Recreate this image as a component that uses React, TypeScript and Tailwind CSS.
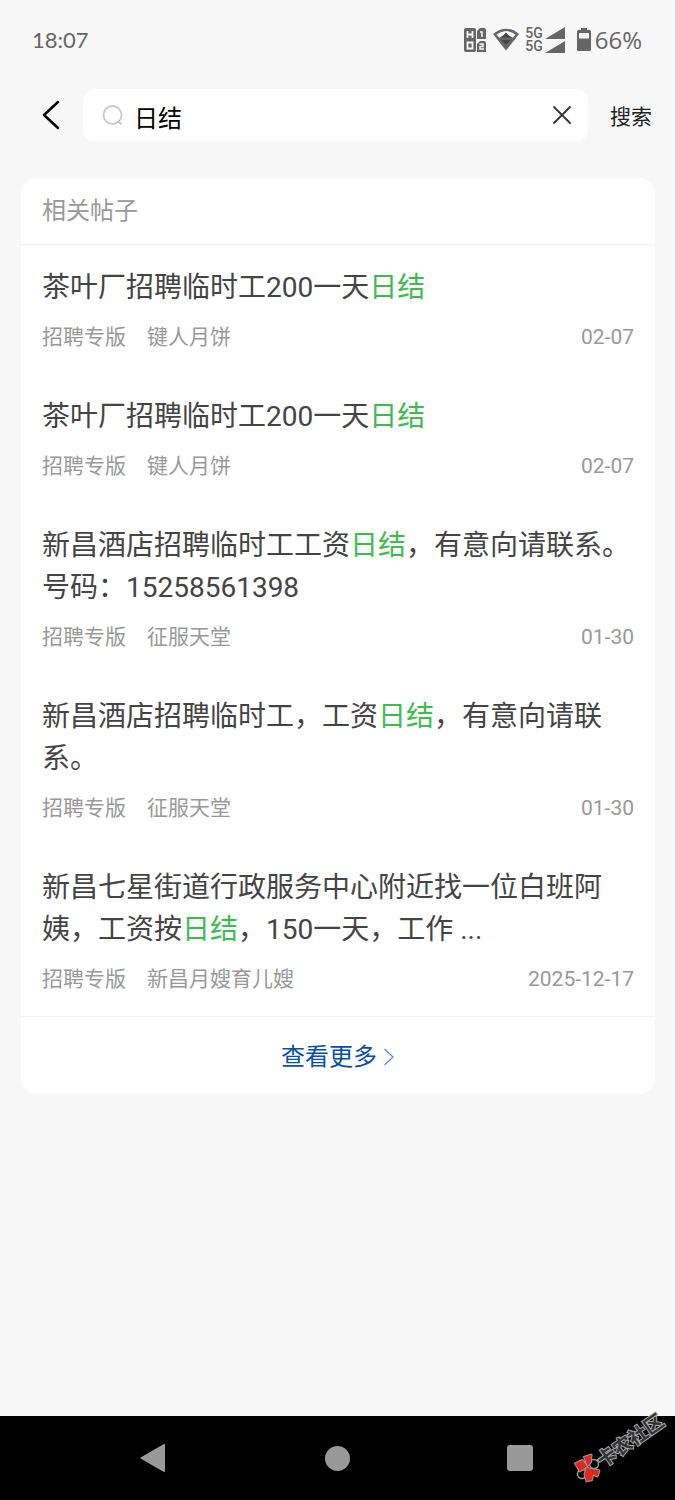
import { type FormEvent, useState } from "react";

type Post = {
  id: number;
  title: string;
  board: string;
  author: string;
  date: string;
};

const KEYWORD = "日结";

const posts: Post[] = [
  { id: 1, title: "茶叶厂招聘临时工200一天日结", board: "招聘专版", author: "键人月饼", date: "02-07" },
  { id: 2, title: "茶叶厂招聘临时工200一天日结", board: "招聘专版", author: "键人月饼", date: "02-07" },
  { id: 3, title: "新昌酒店招聘临时工工资日结，有意向请联系。号码：15258561398", board: "招聘专版", author: "征服天堂", date: "01-30" },
  { id: 4, title: "新昌酒店招聘临时工，工资日结，有意向请联系。", board: "招聘专版", author: "征服天堂", date: "01-30" },
  { id: 5, title: "新昌七星街道行政服务中心附近找一位白班阿姨，工资按日结，150一天，工作 ...", board: "招聘专版", author: "新昌月嫂育儿嫂", date: "2025-12-17" },
];

const StatusBar = () => (
  <div className="flex h-20 items-center justify-between pl-8 pr-[33px] text-[#666]">
    <span className="font-['Lato',sans-serif] text-[22px] leading-8">18:07</span>
    <div className="flex items-center">
      {/* HD 1/2 */}
      <svg width="24" height="26" viewBox="0 0 24 26" className="mr-1.5" aria-hidden="true">
        <rect x="1" y="1" width="12" height="24" rx="2" fill="#666" />
        <path d="M17 1h4q2 0 2 2v9h-9V4zM17 14h4q2 0 2 2v9h-9v-8z" fill="#666" />
        <path d="M4.500 4v7M9.500 4v7M4.500 7.500h5M4.500 15.500h5v6h-5z" fill="none" stroke="#f7f7f7" strokeWidth="1.800" />
        <path d="M17 5h2v5M16.500 17h3.500v2.500h-3v2.500h4" fill="none" stroke="#f7f7f7" strokeWidth="1.500" />
      </svg>
      {/* Wi-Fi */}
      <svg width="26" height="24" viewBox="0 0 26 24" className="mr-1.5" aria-hidden="true">
        <path d="M0 6Q13-4.500 26 6L13 22.500z" fill="#666" />
        <path d="M3.500 6.500Q13-.5 22.500 6.500L19.500 10Q13 5 6.500 10z" fill="#f7f7f7" />
        <path d="M6 10Q13 4 20 10L13 20z" fill="#666" />
        <path d="M8.500 9.500L13 4.500 17.500 9.500zM8.500 12h9L13 16.500z" fill="#444" />
      </svg>
      <span className="flex flex-col font-['Roboto',sans-serif] text-[14px] leading-[13px] font-medium">
        <span>5G</span>
        <span>5G</span>
      </span>
      <svg width="20" height="26" viewBox="0 0 20 26" className="ml-0.5 mr-3" aria-hidden="true">
        <path d="M20 0v12H0zM20 14v12H0z" fill="#666" />
      </svg>
      <svg width="14" height="24" viewBox="0 0 14 24" className="mr-1" aria-hidden="true">
        <path d="M4 0h6v2h2.500Q14 2 14 3.500v18q0 1.500-1.500 1.500h-11Q0 23 0 21.500v-18Q0 2 1.500 2H4z" fill="#666" />
        <path d="M2 5h10v5.500H2z" fill="#f7f7f7" />
      </svg>
      <span className="font-['Open_Sans',sans-serif] text-2xl leading-8">66%</span>
    </div>
  </div>
);

const SearchBar = () => {
  const [query, setQuery] = useState(KEYWORD);
  const submit = (e: FormEvent) => e.preventDefault();

  return (
    <form onSubmit={submit} className="mt-[9px] flex items-center pl-10 pr-[23px]">
      <button type="button" aria-label="返回" className="mr-5">
        <svg width="23" height="32" viewBox="0 0 23 32" fill="none" stroke="#000" strokeWidth="2.500" strokeLinecap="round" strokeLinejoin="round">
          <path d="M18 3L4 16l14 13" />
        </svg>
      </button>
      <div className="flex h-[52px] min-w-0 flex-1 items-center rounded-xl bg-white px-4">
        <svg width="26" height="26" viewBox="0 0 26 26" fill="none" stroke="#c8c8c8" strokeWidth="1.800" strokeLinecap="round" className="shrink-0" aria-hidden="true">
          <circle cx="13.500" cy="13" r="9" />
          <path d="M19.500 19.500l2.500 2.500" />
        </svg>
        <input
          type="text"
          aria-label="搜索内容"
          value={query}
          onChange={(e) => setQuery(e.target.value)}
          className="ml-[9px] h-10 min-w-0 flex-1 bg-transparent pt-0.5 text-2xl text-black outline-none"
        />
        <button type="button" aria-label="清空" onClick={() => setQuery("")}>
          <svg width="20" height="20" viewBox="0 0 20 20" fill="none" stroke="#333" strokeWidth="1.800" strokeLinecap="round">
            <path d="M2 2l16 16M18 2L2 18" />
          </svg>
        </button>
      </div>
      <button type="submit" className="ml-[22px] pt-[3px] text-[21px] leading-8 text-[#222]">
        搜索
      </button>
    </form>
  );
};

const Title = ({ text }: { text: string }) => {
  const [before, after] = text.split(KEYWORD);
  return (
    <h2 className="text-[28px] leading-[42px] text-[#444]">
      {before}
      <span className="text-[#3dbb50]">{KEYWORD}</span>
      {after}
    </h2>
  );
};

const PostItem = ({ post }: { post: Post }) => (
  <li className="px-[21px] pb-[21px] pt-[22px]">
    <a href={`#post-${post.id}`} className="block">
      <Title text={post.title} />
      <div className="mt-3 flex items-center text-[21px] leading-8 text-[#999]">
        <span>{post.board}</span>
        <span className="ml-[21px]">{post.author}</span>
        <time className="ml-auto">{post.date}</time>
      </div>
    </a>
  </li>
);

const NavBar = () => (
  <nav className="relative flex h-[84px] items-center justify-between bg-black pl-[139px] pr-[142px]">
    <button type="button" aria-label="返回上一页">
      <svg width="28" height="28" viewBox="0 0 28 28" fill="#999" stroke="#999" strokeWidth="2" strokeLinejoin="round">
        <path d="M2.500 14L25 1v26z" />
      </svg>
    </button>
    <button type="button" aria-label="主屏幕">
      <span className="block size-[25px] rounded-full bg-[#999]" />
    </button>
    <button type="button" aria-label="最近任务">
      <span className="block size-[26px] rounded-[3px] bg-[#999]" />
    </button>

    {/* Corner watermark */}
    <svg width="105" height="84" viewBox="0 0 105 84" className="pointer-events-none absolute bottom-3 right-0" aria-label="卡农社区">
      <g fill="none" stroke="#999" strokeWidth="1.500">
        <circle cx="12" cy="70" r="4.500" />
        <circle cx="24" cy="60" r="4.500" />
        <path d="M26 57l5-4" />
      </g>
      <path
        d="M5 59.500l7.500-3.500 4.500 6.500-7 5zM14 53l7.500-2.500-.5 7.500-3.500 4zM16.500 63.500l5 1.500 8 1.500-2 6-4.500-2-1 5.500-5.500 1.500-2-7z"
        fill="#e0281e"
        stroke="#999"
        strokeWidth="2"
        strokeLinejoin="round"
        paintOrder="stroke"
      />
      <text
        transform="translate(33 64) rotate(-35)"
        fontSize="19"
        fontWeight="700"
        fill="#333"
        stroke="#aaa"
        strokeWidth="2"
        paintOrder="stroke"
      >
        卡农社区
      </text>
    </svg>
  </nav>
);

const App = () => (
  <div className="flex min-h-screen flex-col bg-[#f7f7f7] font-['Roboto','Noto_Sans_CJK_SC',sans-serif]">
    <StatusBar />
    <SearchBar />

    <main className="mb-8 ml-[21px] mr-5 mt-[37px] rounded-2xl bg-white">
      <h1 className="border-b border-[#f2f2f2] px-[21px] pb-4 pt-4 text-2xl leading-[34px] text-[#999]">相关帖子</h1>
      <ul>
        {posts.map((post) => (
          <PostItem key={post.id} post={post} />
        ))}
      </ul>
      <a href="#more" className="flex h-[78px] items-center justify-center border-t border-[#f2f2f2] pt-0.5 text-2xl text-[#0a50a8]">
        查看更多
        <svg width="12" height="20" viewBox="0 0 12 20" fill="none" stroke="#5b8fcb" strokeWidth="1.300" className="ml-1.5" aria-hidden="true">
          <path d="M1.500 2L10 10l-8.500 8" />
        </svg>
      </a>
    </main>

    <div className="mt-auto">
      <NavBar />
    </div>
  </div>
);

export default App;
